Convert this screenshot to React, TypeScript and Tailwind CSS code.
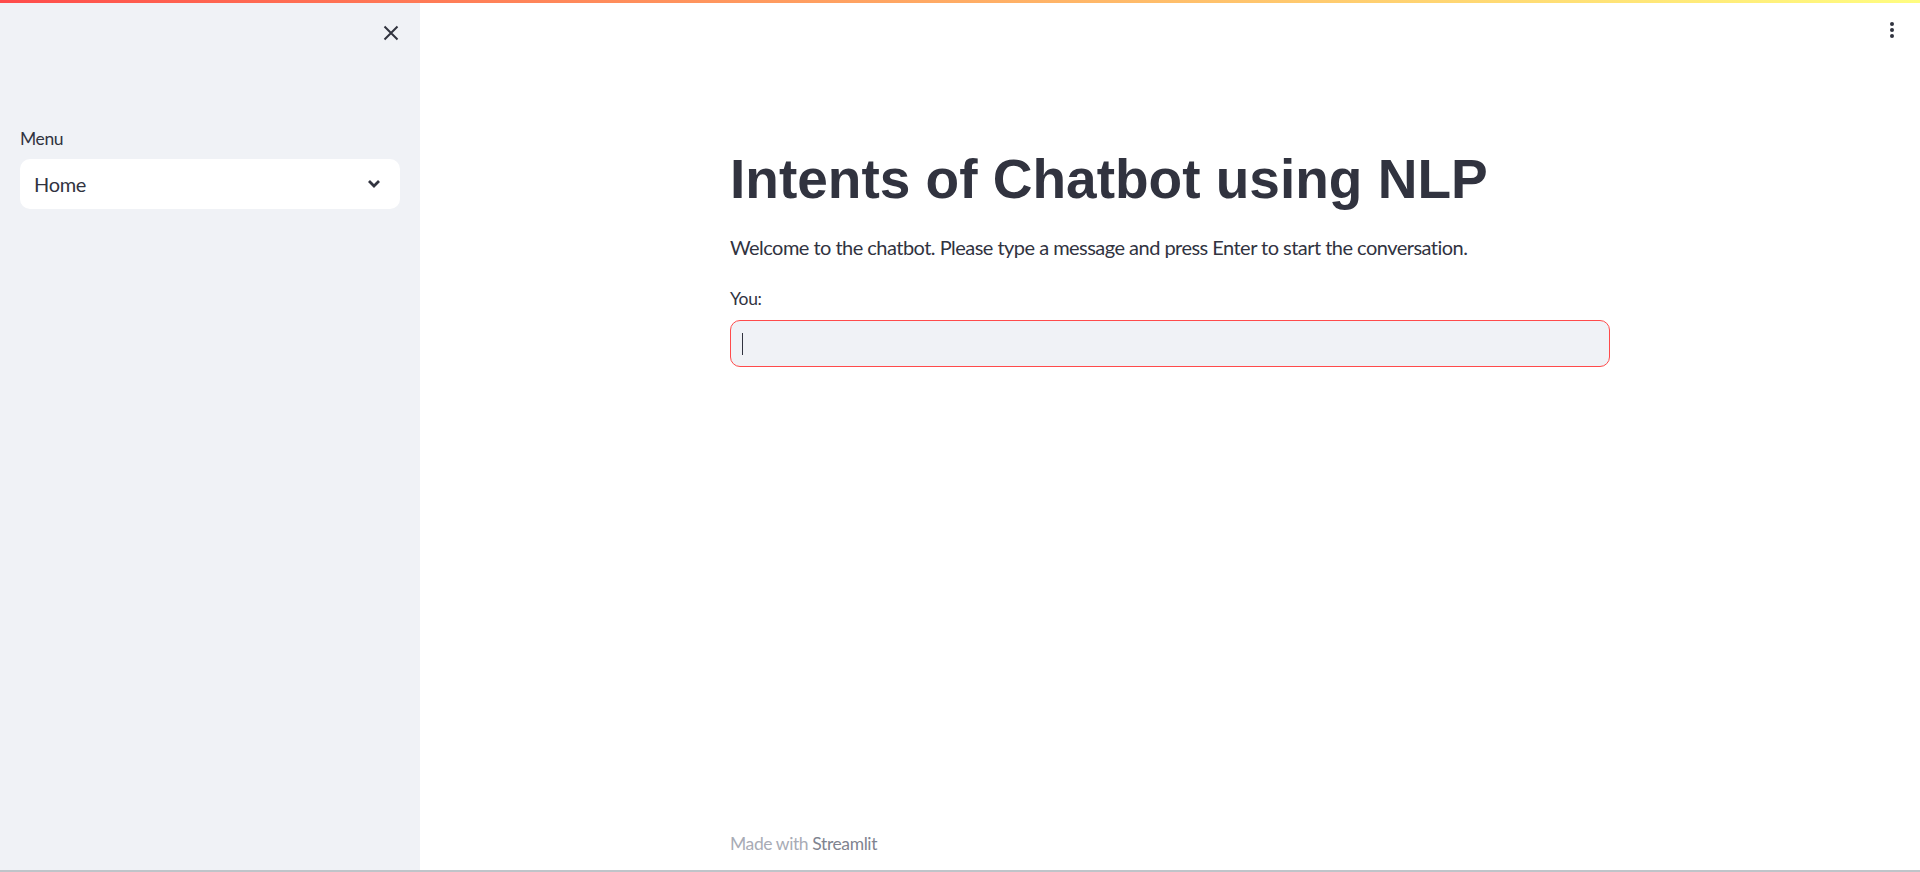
import React from "react";

const body = { fontFamily: '"Lato", "Noto Sans", sans-serif' };

export default function App() {
  return (
    <div className="relative h-[872px] w-full overflow-hidden bg-white text-[#31333f]" style={body}>
      <div className="absolute left-0 right-0 top-0 z-10 h-[3px] bg-gradient-to-r from-[#ff4b4b] to-[#fffd80]" />
      <div className="flex h-[870px] w-full">
        <aside className="flex w-[420px] shrink-0 flex-col bg-[#f0f2f6] px-5">
          <div className="flex h-[66px] items-center justify-end pr-[1px]">
            <svg width="16" height="16" viewBox="0 0 16 16" className="text-[#31333f]">
              <path d="M1.5 1.5 L14.5 14.5 M14.5 1.5 L1.5 14.5" stroke="currentColor" strokeWidth="2" strokeLinecap="butt" />
            </svg>
          </div>
          <div className="mt-[61px] text-[17.5px] leading-[24px] tracking-[-0.4px]">Menu</div>
          <div className="mt-[8px] flex h-[50px] items-center justify-between rounded-[10px] bg-white pl-[14px] pr-[19px]">
            <span className="text-[20px] tracking-[-0.3px]">Home</span>
            <svg width="14" height="10" viewBox="0 0 14 10">
              <path d="M2 2 L7 7 L12 2" stroke="#31333f" strokeWidth="2.8" fill="none" />
            </svg>
          </div>
        </aside>
        <main className="relative flex flex-1 flex-col">
          <div className="absolute right-[26px] top-[22px] flex flex-col gap-[2px]">
            <span className="h-[4px] w-[4px] rounded-full bg-[#31333f]" />
            <span className="h-[4px] w-[4px] rounded-full bg-[#31333f]" />
            <span className="h-[4px] w-[4px] rounded-full bg-[#31333f]" />
          </div>
          <div className="mx-auto flex w-[880px] flex-1 flex-col">
            <h1
              className="mt-[146px] text-[55px] font-bold leading-[66px]"
              style={{ fontFamily: '"Liberation Sans", Arial, sans-serif' }}
            >
              Intents of Chatbot using NLP
            </h1>
            <p className="mt-[20px] text-[20px] leading-[30px] tracking-[-0.53px]">
              Welcome to the chatbot. Please type a message and press Enter to start the conversation.
            </p>
            <div className="mt-[25px] text-[17.5px] leading-[24px] tracking-[-0.4px]">You:</div>
            <div className="mt-[9px] flex h-[47px] items-center rounded-[10px] border border-[#ff4b4b] bg-[#f0f2f6] pl-[11px]">
              <span className="h-[22px] w-[1px] bg-[#31333f]" />
            </div>
            <div className="mt-auto mb-[14px] text-[17.5px] leading-[24px] tracking-[-0.4px] text-[#a8abb5]">
              Made with <span className="text-[#7f8490]">Streamlit</span>
            </div>
          </div>
        </main>
      </div>
      <div className="h-[2px] w-full bg-[#bfc4c9]" />
    </div>
  );
}
